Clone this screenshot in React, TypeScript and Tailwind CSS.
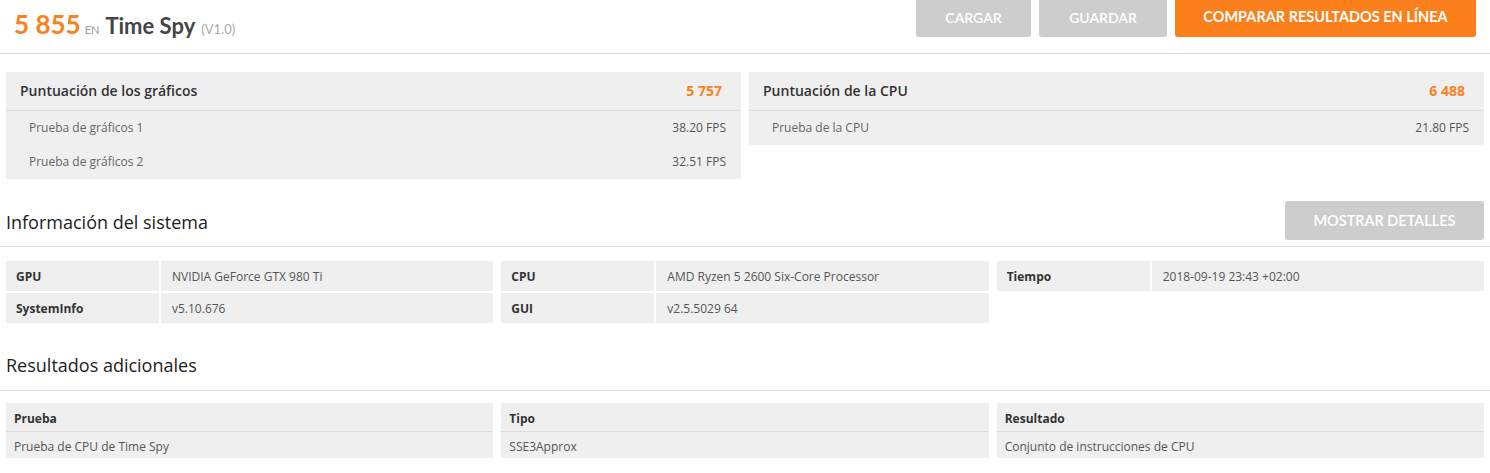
import React from 'react';

const GRAPHICS_TESTS = [
  { label: 'Prueba de gráficos 1', value: '38.20 FPS' },
  { label: 'Prueba de gráficos 2', value: '32.51 FPS' },
];

const CPU_TESTS = [{ label: 'Prueba de la CPU', value: '21.80 FPS' }];

const SYSTEM_INFO = [
  [
    { label: 'GPU', value: 'NVIDIA GeForce GTX 980 Ti' },
    { label: 'SystemInfo', value: 'v5.10.676' },
  ],
  [
    { label: 'CPU', value: 'AMD Ryzen 5 2600 Six-Core Processor' },
    { label: 'GUI', value: 'v2.5.5029 64' },
  ],
  [{ label: 'Tiempo', value: '2018-09-19 23:43 +02:00' }],
];

const EXTRA_RESULTS = [
  { head: 'Prueba', value: 'Prueba de CPU de Time Spy' },
  { head: 'Tipo', value: 'SSE3Approx' },
  { head: 'Resultado', value: 'Conjunto de instrucciones de CPU' },
];

const lato = "font-['Lato',_'Liberation_Sans',_sans-serif]";

function ScoreCard({ title, score, tests }: { title: string; score: string; tests: { label: string; value: string }[] }) {
  return (
    <div className="flex-1 bg-[#efefef]">
      <div className="h-[39px] flex items-center justify-between pl-[14px] pr-[19px] pb-[1px] border-b border-[#dcdcdc]">
        <span className="text-[14px] font-semibold text-[#333]">{title}</span>
        <span className="text-[14px] font-bold text-[#f7821e]">{score}</span>
      </div>
      {tests.map(t => (
        <div key={t.label} className="h-[34px] flex items-center justify-between pl-[23px] pr-[15px] text-[12px] text-[#666]">
          <span>{t.label}</span>
          <span className="text-[#555]">{t.value}</span>
        </div>
      ))}
    </div>
  );
}

export default function App() {
  return (
    <div className="min-h-screen bg-white font-['Open_Sans',_'Liberation_Sans',_sans-serif] text-[#333]">
      {/* Header */}
      <header className="h-[54px] border-b border-[#dedede] flex items-start justify-between">
        <div className={`${lato} flex items-baseline pl-[14px] pt-[7px]`}>
          <span className="text-[26px] font-bold text-[#f7821e] leading-[34px]">5 855</span>
          <span className="ml-[4px] text-[11px] text-[#9a9a9a]">EN</span>
          <span className="ml-[6px] text-[22px] font-bold text-[#444]">Time Spy</span>
          <span className="ml-[6px] text-[13px] text-[#aaa]">(V1.0)</span>
        </div>
        <div className={`${lato} flex gap-2 pr-[14px]`}>
          <button className="w-[115px] h-[37px] pb-[3px] rounded-b-[3px] bg-[#cdcdcd] text-white text-[14px] font-semibold uppercase">Cargar</button>
          <button className="w-[128px] h-[37px] pb-[3px] rounded-b-[3px] bg-[#cdcdcd] text-white text-[14px] font-semibold uppercase">Guardar</button>
          <button className="w-[301px] h-[37px] pb-[3px] rounded-b-[3px] bg-[#fb801c] text-white text-[14.5px] font-bold uppercase">Comparar resultados en línea</button>
        </div>
      </header>

      {/* Score cards */}
      <div className="px-[6px] pt-[18px] flex items-start gap-2">
        <ScoreCard title="Puntuación de los gráficos" score="5 757" tests={GRAPHICS_TESTS} />
        <ScoreCard title="Puntuación de la CPU" score="6 488" tests={CPU_TESTS} />
      </div>

      {/* System info */}
      <div className="mt-[22px] border-b border-[#dedede]">
        <div className="px-[6px] pb-[6px] flex items-end justify-between">
          <h2 className="mb-[6px] text-[18px] leading-[24px] font-medium text-[#222]">Información del sistema</h2>
          <button className={`${lato} w-[199px] h-[39px] rounded-[3px] bg-[#cdcdcd] text-white text-[14.5px] font-semibold uppercase`}>Mostrar detalles</button>
        </div>
      </div>

      <div className="px-[6px] pt-[14px] grid grid-cols-3 gap-2 items-start">
        {SYSTEM_INFO.map((group, i) => (
          <div key={i} className="grid grid-cols-[153px_1fr] gap-[2px] text-[12px]">
            {group.map(row => (
              <React.Fragment key={row.label}>
                <div className="h-[30px] flex items-center pt-[1px] px-[10px] bg-[#efefef] font-bold text-[#333]">{row.label}</div>
                <div className="h-[30px] flex items-center pt-[1px] px-[11px] bg-[#efefef] text-[#555]">{row.value}</div>
              </React.Fragment>
            ))}
          </div>
        ))}
      </div>

      {/* Additional results */}
      <div className="mt-[30px] border-b border-[#dedede]">
        <div className="px-[6px] pb-[13px]">
          <h2 className="text-[18px] leading-[24px] font-medium text-[#222]">Resultados adicionales</h2>
        </div>
      </div>

      <div className="px-[6px] pt-[12px] grid grid-cols-3 gap-2">
        {EXTRA_RESULTS.map(col => (
          <div key={col.head} className="bg-[#efefef] text-[12px]">
            <div className="h-[29px] flex items-center pt-[3px] px-[8px] border-b border-[#dcdcdc] font-bold text-[#333]">{col.head}</div>
            <div className="h-[26px] flex items-center pt-[4px] px-[8px] text-[#555]">{col.value}</div>
          </div>
        ))}
      </div>
    </div>
  );
}
